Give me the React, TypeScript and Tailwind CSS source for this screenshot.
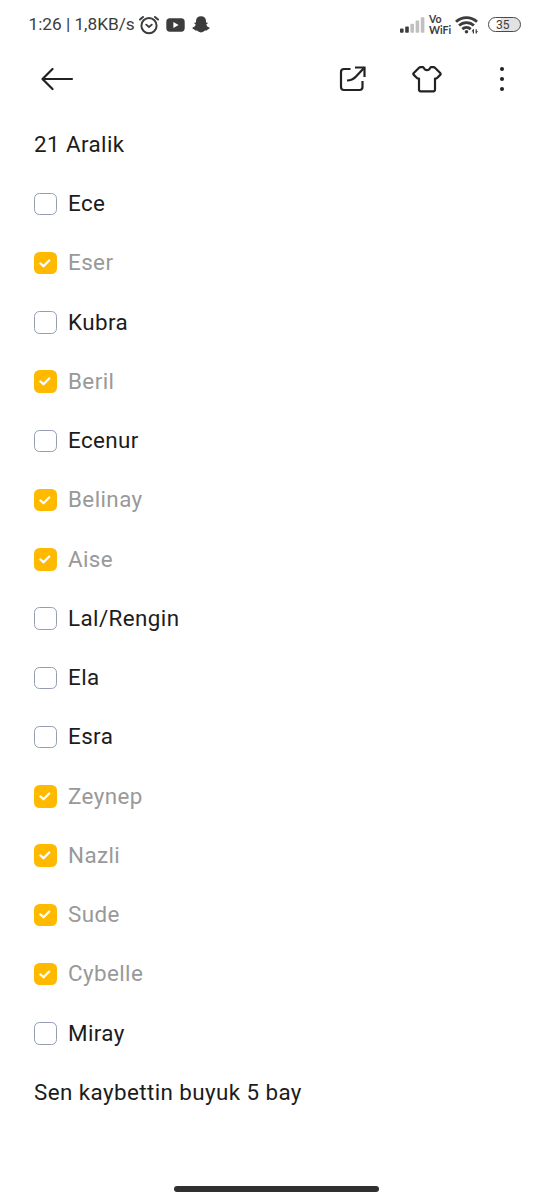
import React from 'react'

interface NoteItem {
  label: string
  done: boolean
}

const items: NoteItem[] = [
  { label: 'Ece', done: false },
  { label: 'Eser', done: true },
  { label: 'Kubra', done: false },
  { label: 'Beril', done: true },
  { label: 'Ecenur', done: false },
  { label: 'Belinay', done: true },
  { label: 'Aise', done: true },
  { label: 'Lal/Rengin', done: false },
  { label: 'Ela', done: false },
  { label: 'Esra', done: false },
  { label: 'Zeynep', done: true },
  { label: 'Nazli', done: true },
  { label: 'Sude', done: true },
  { label: 'Cybelle', done: true },
  { label: 'Miray', done: false },
]

const AlarmIcon = () => (
  <svg width="22" height="20" viewBox="0 0 22 20" fill="none" stroke="#3c3c3c" strokeWidth="2" strokeLinecap="round">
    <circle cx="11" cy="10.7" r="7.6" />
    <path d="M2 4.6 5 2M20 4.6 17 2" strokeWidth="2" />
    <path d="m8.2 9.6 2.8 2.4 2.8-2.4" strokeWidth="1.8" strokeLinejoin="round" />
  </svg>
)

const YoutubeIcon = () => (
  <svg width="19" height="14" viewBox="0 0 19 14">
    <rect x="0.3" y="0.3" width="18.4" height="13.4" rx="3.6" fill="#3c3c3c" />
    <path d="M7.4 4v6L12.6 7z" fill="#fff" />
  </svg>
)

const SnapchatIcon = () => (
  <svg width="18" height="17" viewBox="0 0 18 17" fill="#3c3c3c">
    <path d="M9 .3c3.100 0 5 2 5 4.800v1.500c.5.200 1.100-.2 1.500.2.400.6-.2 1.200-1.200 1.700.3 1.500 1.400 2.600 3 3.100.6.300.3 1.100-.5 1.400-.9.300-1.200.3-1.400 1.100-.2.500-.9.400-1.700.4-1.600 0-2.200 1.900-4.700 1.900s-3.100-1.900-4.700-1.900c-.8 0-1.500.1-1.700-.4-.2-.8-.5-.8-1.400-1.100-.8-.3-1.100-1.100-.5-1.400 1.600-.5 2.700-1.600 3-3.100-1-.5-1.600-1.100-1.200-1.700.4-.4 1 0 1.500-.2V5.100C4 2.300 5.900.3 9 .3z" />
  </svg>
)

const SignalIcon = () => (
  <svg width="25" height="16" viewBox="0 0 25 16">
    <rect x="0" y="11.6" width="3.6" height="4.1" rx="0.8" fill="#3c3c3c" />
    <rect x="5.2" y="9.6" width="3.6" height="6.1" rx="0.8" fill="#3c3c3c" />
    <rect x="10.4" y="6.8" width="3.6" height="8.9" rx="0.8" fill="#c0c0c0" />
    <rect x="15.6" y="3.6" width="3.6" height="12.1" rx="0.8" fill="#c0c0c0" />
    <rect x="20.8" y="0.3" width="3.6" height="15.4" rx="0.8" fill="#c0c0c0" />
  </svg>
)

const WifiIcon = () => (
  <svg width="24" height="18" viewBox="0 0 24 18" fill="none" stroke="#3c3c3c" strokeWidth="2.8">
    <path d="M1 5.800a15.200 15.200 0 0 1 21 0" />
    <path d="M4.100 9.500a10.700 10.700 0 0 1 14.800 0" />
    <path d="M7.300 13.100a6.200 6.200 0 0 1 8.400 0" />
    <circle cx="11.5" cy="15.7" r="1.8" fill="#3c3c3c" stroke="none" />
    <path d="M18.400 13.200v4.200M21.200 13.200v4.200" strokeWidth="1.2" />
    <path d="m16.600 15.400 1.800-2.400v2.400zM23 15l-1.800 2.600V15z" fill="#3c3c3c" stroke="none" />
  </svg>
)

const StatusBar = () => (
  <div className="flex h-[49px] items-center justify-between pr-[33px] pl-[28.5px] text-[#3c3c3c]">
    <div className="flex items-center">
      <span className="w-[109px] text-[17.3px] leading-none tracking-[-0.03px] whitespace-nowrap">1:26 | 1,8KB/s</span>
      <AlarmIcon />
      <span className="ml-[6px]"><YoutubeIcon /></span>
      <span className="ml-[7px]"><SnapchatIcon /></span>
    </div>
    <div className="flex items-center">
      <SignalIcon />
      <div className="ml-1 w-[26px] font-['Lato',sans-serif] text-[10.5px] font-bold">
        <div className="h-[11px] leading-[11px]">Vo</div>
        <div className="h-[11px] leading-[11px]">WiFi</div>
      </div>
      <WifiIcon />
      <div className="ml-[9px] flex h-[15px] w-[33px] items-center rounded-full border-[1.5px] border-[#4a4a4a] bg-linear-to-r from-white from-40% to-[#e2e2e2] to-40% pl-[7px] text-[12px] leading-none">
        35
      </div>
    </div>
  </div>
)

const Toolbar = () => (
  <div className="flex h-[60px] items-center justify-between pr-[49px] pl-[41px]">
    <svg width="33" height="24" viewBox="0 0 33 24" fill="none" stroke="#222" strokeWidth="2.2" strokeLinecap="round" strokeLinejoin="round">
      <path d="M31 12H2M11.5 2 1.5 12l10 10" />
    </svg>
    <div className="flex items-center">
      <svg width="28" height="28" viewBox="0 0 28 28" fill="none" stroke="#222" strokeWidth="2.2">
        <path d="M12.500 4H6Q3 4 3 7v15Q3 25 6 25h15.500q3 0 3-3V16" />
        <path d="M17 2.500h9.500V12" />
        <path d="M26 3 18 11.500C15.500 14.200 13 15.500 9 15.500" />
      </svg>
      <svg className="ml-[46px]" width="30" height="28" viewBox="0 0 30 28" fill="none" stroke="#222" strokeWidth="2.2" strokeLinejoin="round">
        <path d="M8.700 2.200h2.100c.5 0 .8.300 1 .7.600 1.400 1.700 2.300 3.200 2.300s2.600-.9 3.200-2.300c.2-.4.500-.7 1-.7h2.100c.8 0 1.400.3 1.900.8l5 5c.6.600.6 1.300 0 1.900l-3.400 3.300c-.4.400-.7.500-1.300.5H23v10.900c0 1-.7 1.700-1.700 1.700H8.700c-1 0-1.700-.7-1.700-1.700V13.700h-.5c-.6 0-.9-.1-1.300-.5L1.800 9.900c-.6-.6-.6-1.300 0-1.900l5-5c.5-.5 1.100-.8 1.900-.8z" />
      </svg>
      <svg className="ml-[57px]" width="6" height="28" viewBox="0 0 6 28" fill="#222">
        <circle cx="3" cy="4" r="2" />
        <circle cx="3" cy="14" r="2" />
        <circle cx="3" cy="24" r="2" />
      </svg>
    </div>
  </div>
)

const Checkbox = ({ checked }: { checked: boolean }) =>
  checked ? (
    <span className="flex size-[22.5px] items-center justify-center rounded-[5.5px] bg-[#ffba00]">
      <svg width="12" height="9" viewBox="0 0 12 9" fill="none" stroke="#fff" strokeWidth="2.3" strokeLinecap="round" strokeLinejoin="round">
        <path d="m1.500 4.500 3 2.700 5.700-5.700" />
      </svg>
    </span>
  ) : (
    <span className="size-[22.5px] rounded-[5.5px] border border-[#959db0]" />
  )

export default function App() {
  return (
    <div className="flex h-[1200px] w-[554px] flex-col bg-white font-['Roboto',sans-serif]">
      <StatusBar />
      <Toolbar />
      <main className="mt-[6px] flex-1 px-[34px] text-[22.4px] tracking-[0.41px] text-[#1c1c1c]">
        <div className="flex h-[59.25px] items-center">21 Aralik</div>
        {items.map(item => (
          <div key={item.label} className="flex h-[59.25px] items-center">
            <Checkbox checked={item.done} />
            <span className={item.done ? 'ml-[11.5px] text-[#999]' : 'ml-[11.5px]'}>{item.label}</span>
          </div>
        ))}
        <div className="flex h-[59.25px] items-center">Sen kaybettin buyuk 5 bay</div>
      </main>
      <div className="mr-px mb-[8.5px] h-[5.5px] w-[205px] self-center rounded-full bg-[#303030]" />
    </div>
  )
}
